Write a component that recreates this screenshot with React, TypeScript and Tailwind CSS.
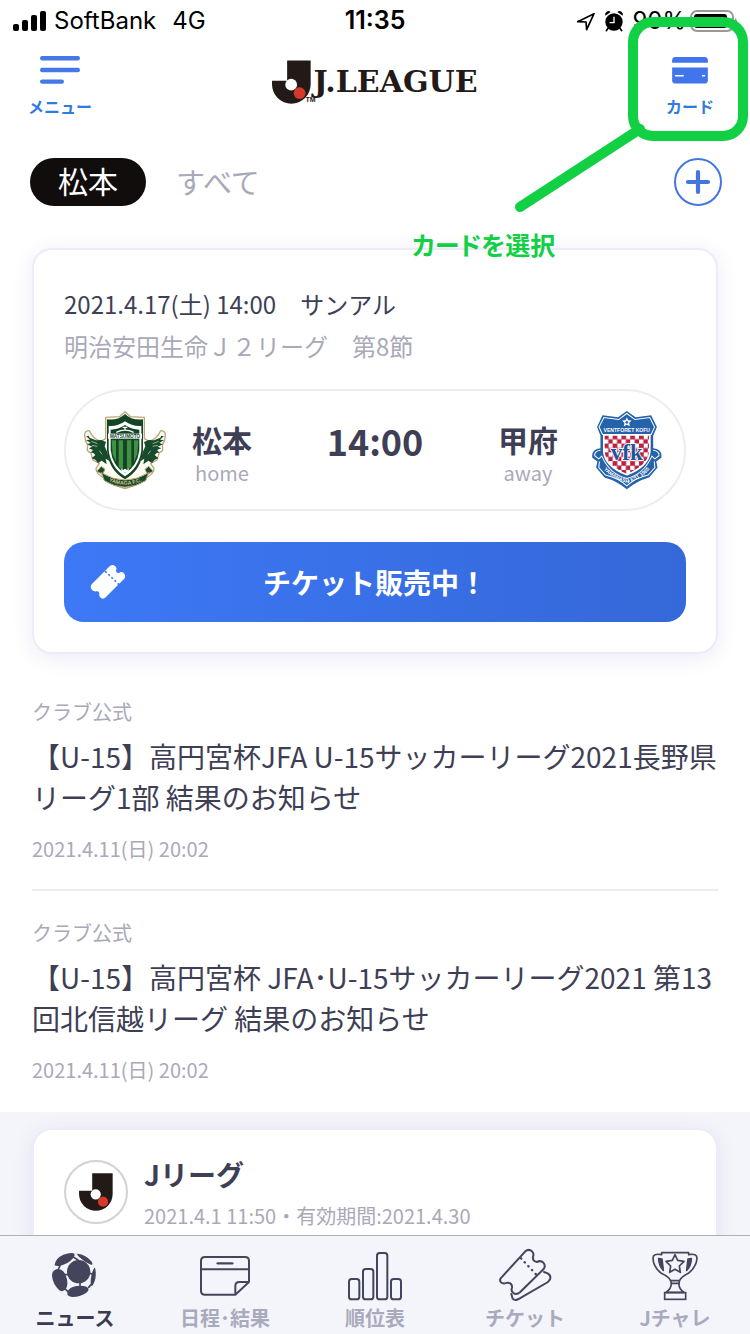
import type { ReactNode } from "react";

type Article = {
  category: string;
  title: string;
  date: string;
};

const articles: Article[] = [
  {
    category: "クラブ公式",
    title: "【U-15】高円宮杯JFA U-15サッカーリーグ2021長野県リーグ1部 結果のお知らせ",
    date: "2021.4.11(日) 20:02",
  },
  {
    category: "クラブ公式",
    title: "【U-15】高円宮杯 JFA･U-15サッカーリーグ2021 第13回北信越リーグ 結果のお知らせ",
    date: "2021.4.11(日) 20:02",
  },
];

function JMark({ className }: { className?: string }) {
  return (
    <svg viewBox="70 180 116 130" className={className} aria-hidden="true">
      <path d="M115 181H185V252A57.5 57.5 0 0 1 70 252V241H115Z" fill="#231a18" />
      <circle cx="127" cy="253" r="17.5" fill="#fff" />
      <circle cx="152" cy="278" r="17.5" fill="#d5392b" />
    </svg>
  );
}

function StatusBar() {
  return (
    <div className="flex h-10 items-center px-3 pt-0.5 font-['Inter',sans-serif] text-2xl text-black">
      <div className="flex flex-1 items-center">
        <svg viewBox="0 0 34 22" className="h-[22px] w-[34px]" aria-hidden="true">
          <rect x="1" y="14" width="6" height="7" rx="2" />
          <rect x="10" y="10" width="6" height="11" rx="2" />
          <rect x="19" y="5" width="6" height="16" rx="2" />
          <rect x="28" y="1" width="6" height="20" rx="2" />
        </svg>
        <span className="ml-2">SoftBank</span>
        <span className="ml-4">4G</span>
      </div>
      <span className="text-[25px] font-semibold">11:35</span>
      <div className="flex flex-1 items-center justify-end">
        <svg viewBox="230 30 60 60" className="h-5 w-5" fill="none" stroke="#000" strokeWidth="5" strokeLinejoin="round" aria-hidden="true">
          <path d="M235 62L284 38L262 86L260 63Z" />
        </svg>
        <svg viewBox="314 26 60 64" className="ml-2 h-[22px] w-5" aria-hidden="true">
          <circle cx="344" cy="61" r="26" />
          <path d="M318 42a10 10 0 0 1 16-11zM370 42a10 10 0 0 0-16-11z" />
          <path d="M326 80l-5 7M362 80l5 7" stroke="#000" strokeWidth="5" strokeLinecap="round" />
          <path d="M344 45V63H331" fill="none" stroke="#fff" strokeWidth="4" />
        </svg>
        <span className="ml-2">90%</span>
        <svg viewBox="0 0 48 24" className="ml-1 h-6 w-12" aria-hidden="true">
          <rect x="1" y="2" width="42" height="20" rx="6" fill="none" stroke="#999" strokeWidth="2" />
          <rect x="4" y="5" width="33" height="14" rx="3" />
          <path d="M45 9a4 4 0 0 1 0 7z" fill="#999" />
        </svg>
      </div>
    </div>
  );
}

function Header() {
  return (
    <header className="grid grid-cols-[64px_1fr_64px] px-7 pt-4">
      <button type="button" className="flex flex-col items-center text-base font-bold leading-6 text-[#2f7be0]">
        <svg viewBox="0 0 40 28" className="h-7 w-10" stroke="#4379e6" strokeWidth="4.4" strokeLinecap="round" aria-hidden="true">
          <path d="M2.2 2.2H37.8M2.2 14H37.8M2.2 25.6H21.8" />
        </svg>
        <span className="mt-2.5 whitespace-nowrap">メニュー</span>
      </button>
      <h1 className="flex items-start justify-center pt-1 text-[#231a18]">
        <JMark className="h-11 w-[39px] shrink-0" />
        <span className="relative ml-0.5 whitespace-nowrap font-['DejaVu_Serif',serif] text-[30px] font-bold leading-[44px]">
          J.LEAGUE
          <span className="absolute -left-2 top-9 font-['Liberation_Sans',sans-serif] text-[7px] leading-[8px]">TM</span>
        </span>
      </h1>
      <button type="button" className="flex flex-col items-center text-base font-bold leading-6 text-[#2f7be0]">
        <svg viewBox="0 0 38 29" className="h-7 w-[38px]" fill="#4175ec" aria-hidden="true">
          <path d="M4 1H34Q37.500 1 37.500 4.500V7H.5V4.500Q.5 1 4 1Z" />
          <path d="M.5 12H37.500V25Q37.500 28.500 34 28.500H4Q.5 28.500 .5 25Z" />
          <path d="M4 20.500H12M32 20.500H34" stroke="#fff" strokeWidth="1.500" strokeLinecap="round" />
        </svg>
        <span className="mt-2.5 whitespace-nowrap">カード</span>
      </button>
    </header>
  );
}

function ClubTabs() {
  return (
    <div className="mt-10 flex h-12 items-center pl-[30px] pr-7">
      <button type="button" className="h-12 rounded-full bg-[#110d0c] px-7 pb-1 text-[30px] leading-[44px] text-white">
        松本
      </button>
      <button type="button" className="ml-[30px] pb-0.5 text-[29px] leading-[46px] text-[#a9a9b9]">
        すべて
      </button>
      <button type="button" aria-label="クラブを追加" className="ml-auto h-12 w-12">
        <svg viewBox="0 0 48 48" fill="none" stroke="#4377df" strokeLinecap="round">
          <circle cx="24" cy="24" r="23" strokeWidth="2" />
          <path d="M24 14V34M14 24H34" strokeWidth="4.200" />
        </svg>
      </button>
    </div>
  );
}

function MatsumotoCrest() {
  return (
    <svg viewBox="40 32 246 236" className="h-20 w-[82px]" role="img" aria-label="松本山雅FC">
      <path
        d="M163 35L180 50L221 52V116L236 124Q260 115 270 92Q284 92 284 106Q284 122 275 135L276 146Q278 154 266 158L259 180Q250 186 240 190L250 206Q252 222 218 238Q190 258 163 266Q136 258 108 238Q74 222 76 206L86 190Q76 186 67 180L60 158Q48 154 50 146L51 135Q42 122 42 106Q42 92 56 92Q66 115 90 124L105 116V52L146 50Z"
        fill="#fffdf3"
        stroke="#bda77a"
        strokeWidth="4"
        strokeLinejoin="round"
      />
      {/* wings and bodies */}
      {["", "translate(326 0) scale(-1 1)"].map((transform) => (
        <g key={transform} transform={transform}>
          <path
            d="M49 97L57 113L76 121L92 120L106 126L102 139L110 157L116 183L105 176L108 193L93 182L82 189L74 179L63 175L74 165L67 158H59L67 150L54 145L65 140L49 133L60 129L46 120L58 119L46 108L54 108Z"
            fill="#164c2b"
          />
          <path d="M62 124l18 7M64 136l16 3M86 152l8 11" stroke="#d9e3ce" strokeWidth="2" fill="none" />
          <path d="M78 214l14-15 11 9-7 15z" fill="#164c2b" stroke="#bda77a" strokeWidth="3" />
        </g>
      ))}
      <path d="M163 42Q183 62 217 58V151Q212 211 163 238Q114 211 109 151V58Q143 62 163 42Z" fill="#124425" />
      <path d="M163 64Q185 80 212 78V151Q205 204 163 229Q121 204 114 151V78Q141 80 163 64Z" fill="#fff" />
      <path d="M163 75Q184 89 206 89V151Q200 199 163 220Q126 199 120 151V89Q142 89 163 75Z" fill="#124425" />
      <path d="M156 82h14M163 82v10M137 97Q163 84 189 97" stroke="#fff" strokeWidth="4" fill="none" />
      <rect x="112" y="101" width="102" height="15" fill="#fff" />
      <text x="163" y="113" textAnchor="middle" fontSize="14" fontWeight="bold" fill="#124425" fontFamily="Liberation Sans, sans-serif">
        MATSUMOTO
      </text>
      <path d="M123 121H136V186L126 162ZM144 121H157V211L144 200ZM169 121H182V200L169 211ZM190 121H203L200 162L190 186Z" fill="#409242" />
      <path d="M151 205l6 5 6-4 6 4 6-5-3 13h-18z" fill="#fff" />
      <path d="M92 218Q163 262 234 218L225 242Q163 281 101 242Z" fill="#164c2b" stroke="#bda77a" strokeWidth="3" />
      <path id="yamaga-line" d="M99 235Q163 274 229 235" fill="none" />
      <text fontSize="16" fontWeight="bold" fill="#d5bd83" fontFamily="Liberation Sans, sans-serif">
        <textPath href="#yamaga-line" startOffset="50%" textAnchor="middle">
          YAMAGA F.C.
        </textPath>
      </text>
    </svg>
  );
}

function KofuCrest() {
  return (
    <svg viewBox="36 32 210 236" className="h-20 w-[71px]" role="img" aria-label="ヴァンフォーレ甲府">
      <defs>
        <pattern id="kofu-check" x="71" y="105" width="26" height="26" patternUnits="userSpaceOnUse">
          <rect width="26" height="26" fill="#fff" />
          <path d="M0 0h14v14H0zM13 13h13v13H13z" fill="#b9213f" />
        </pattern>
      </defs>
      <path
        d="M139 35L165 53L211 47L228 82L217 108V145Q245 148 241 173L226 184L230 202L205 231Q169 241 139 266Q109 241 73 231L48 202L52 184L37 173Q33 148 61 145V108L51 82L67 47L113 53Z"
        fill="#2462a9"
      />
      <path d="M139 42L163 60L207 54L221 82L211 104H67L57 82L71 54L115 60Z" fill="none" stroke="#fff" strokeWidth="3" />
      <path d="M71 105H207V154Q204 198 139 223Q74 198 71 154Z" fill="url(#kofu-check)" stroke="#fff" strokeWidth="5" />
      <path d="M139 53l4 9 10 1-7 7 2 10-9-5-9 5 2-10-7-7 10-1z" fill="#fff" />
      <circle cx="139" cy="68" r="4" fill="#2462a9" />
      <text x="139" y="96" textAnchor="middle" fontSize="15" fontWeight="bold" fill="#fff" fontFamily="Liberation Sans Narrow, Liberation Sans, sans-serif">
        VENTFORET KOFU
      </text>
      <text x="139" y="179" textAnchor="middle" fontSize="68" fontWeight="bold" fill="#1f559b" stroke="#fff" strokeWidth="5" paintOrder="stroke" fontFamily="Liberation Serif, serif">
        vfk
      </text>
      <path d="M61 151Q42 153 44 167L56 176L65 168Q89 222 139 234Q189 222 213 168L222 176L234 167Q236 153 217 151" fill="none" stroke="#fff" strokeWidth="3" />
      <path d="M58 184L56 202L76 224Q112 232 139 256Q166 232 202 224L222 202L220 184" fill="none" stroke="#fff" strokeWidth="3" />
      <path id="kofu-line" d="M60 192Q84 231 139 248Q194 231 218 192" fill="none" />
      <text fontSize="15" fontWeight="bold" fill="#fff" fontFamily="Liberation Sans, sans-serif">
        <textPath href="#kofu-line" startOffset="50%" textAnchor="middle">
          YAMANASHI EST 1965
        </textPath>
      </text>
    </svg>
  );
}

function Team({ name, side }: { name: string; side: string }) {
  return (
    <div className="flex w-[60px] flex-col items-center pt-2">
      <span className="text-[30px] font-bold leading-9">{name}</span>
      <span className="mt-0.5 text-xl leading-7 text-[#a9a9b9]">{side}</span>
    </div>
  );
}

function MatchCard() {
  return (
    <section className="mx-8 mt-[42px] rounded-[20px] border-2 border-[#ececf6] bg-white px-[30px] pb-[30px] pt-[33px] shadow-[0_4px_20px_rgba(90,90,190,0.12)]">
      <p className="text-2xl leading-[42px]">2021.4.17(土) 14:00　サンアル</p>
      <p className="text-2xl leading-[42px] text-[#a9a9b9]">明治安田生命Ｊ２リーグ　第8節</p>
      <div className="mt-[22px] flex h-[122px] items-center justify-between rounded-full border-2 border-[#ececf2] pl-[18px] pr-[21px]">
        <div className="flex items-center gap-[26px]">
          <MatsumotoCrest />
          <Team name="松本" side="home" />
        </div>
        <span className="mb-5 text-4xl font-bold leading-[44px]">14:00</span>
        <div className="flex items-center gap-[34px]">
          <Team name="甲府" side="away" />
          <KofuCrest />
        </div>
      </div>
      <button
        type="button"
        className="mt-[31px] grid h-20 w-full grid-cols-[36px_1fr_36px] items-center rounded-[20px] bg-linear-to-r from-[#3d78f6] to-[#3568d8] px-[26px] text-[28px] font-bold text-white"
      >
        <svg viewBox="91 105 108 108" className="h-9 w-9" aria-hidden="true">
          <path
            d="M96 166L150 112Q158 105 166 111Q173 117 169 124Q169 133 178 132Q186 125 193 133Q200 142 193 150L138 205Q131 213 123 206Q117 201 119 194Q118 185 110 187Q102 188 97 183Q90 175 96 166Z"
            fill="#fff"
          />
          <path d="M136 126L180 169" stroke="#3d76f2" strokeWidth="5" strokeDasharray="7 7 6 7 6 7 6 7 8" />
        </svg>
        <span>チケット販売中！</span>
      </button>
    </section>
  );
}

function ArticleItem({ article }: { article: Article }) {
  return (
    <a href="#article" className="block pb-[26px] pt-7">
      <p className="text-xl leading-7 text-[#a9a9b9]">{article.category}</p>
      <h2 className="mt-2.5 text-[28px] leading-[41px]">{article.title}</h2>
      <p className="mt-[17px] text-xl leading-7 text-[#a9a9b9]">{article.date}</p>
    </a>
  );
}

function LeagueCard() {
  return (
    <section className="bg-[#f4f5fa] px-8 pt-4">
      <div className="flex min-h-[180px] items-start gap-4 rounded-t-[20px] border-2 border-[#ececf6] bg-white px-[30px] pt-[30px] shadow-[0_4px_20px_rgba(90,90,190,0.12)]">
        <div className="flex h-16 w-16 items-center justify-center rounded-full border-2 border-[#d2d2d4]">
          <JMark className="h-[38px] w-[34px]" />
        </div>
        <div>
          <h2 className="-mt-1 text-[28px] font-bold leading-9">Jリーグ</h2>
          <p className="mt-2.5 text-xl leading-7 text-[#a9a9b9]">2021.4.1 11:50・有効期間:2021.4.30</p>
        </div>
      </div>
    </section>
  );
}

function TabIcon({ viewBox, children }: { viewBox: string; children: ReactNode }) {
  return (
    <svg
      viewBox={viewBox}
      className="h-[54px] w-[54px]"
      fill="none"
      stroke="#44455c"
      strokeWidth="6"
      strokeLinejoin="round"
      strokeLinecap="round"
      aria-hidden="true"
    >
      {children}
    </svg>
  );
}

const tabs = [
  {
    label: "ニュース",
    icon: (
      <TabIcon viewBox="144 444 162 162">
        <circle cx="222" cy="525" r="65" strokeWidth="1" stroke="#c5c6d2" />
        <g fill="#44455c" stroke="none">
          <circle cx="236" cy="515" r="35" />
          <path d="M164 496Q164 476 190 464Q218 454 224 463Q225 475 202 489Q175 503 164 496Z" />
          <path d="M231 461Q259 464 274 484Q281 496 273 494Q255 487 240 473Q231 466 231 461Z" />
          <path d="M169 508Q185 504 195 521Q207 547 199 564Q193 577 180 572Q159 555 156 528Q156 512 169 508Z" />
          <path d="M285 503Q290 524 284 543Q276 564 273 555Q270 543 275 523Q280 504 285 503Z" />
          <path d="M202 582Q201 568 218 561Q242 553 261 561Q272 569 257 580Q240 591 217 591Q202 588 202 582Z" />
        </g>
        <path d="M180 497L174 510M218 470L234 480M192 524L206 524M240 548L240 558M270 520L277 523M197 568L206 577M266 562L273 554" strokeWidth="5" />
      </TabIcon>
    ),
  },
  {
    label: "日程･結果",
    icon: (
      <TabIcon viewBox="594 444 162 162">
        <path d="M706 584H615Q603 584 603 572V483Q603 471 615 471H735Q747 471 747 483V546L706 584V558Q706 546 718 546H747" />
        <path d="M603 508H747" />
        <path d="M653 490H697" strokeWidth="7" />
      </TabIcon>
    ),
  },
  {
    label: "順位表",
    icon: (
      <TabIcon viewBox="294 54 162 162">
        <rect x="297" y="147" width="31" height="61" rx="8" />
        <rect x="339" y="117" width="31" height="91" rx="8" />
        <rect x="381" y="69" width="31" height="139" rx="8" />
        <rect x="423" y="147" width="30" height="61" rx="8" />
      </TabIcon>
    ),
  },
  {
    label: "チケット",
    icon: (
      <TabIcon viewBox="-6 54 162 162">
        <path d="M2 145L76 64Q86 55 96 64Q103 71 99 80Q97 94 111 96Q122 90 130 98Q138 107 131 117L60 187Q49 196 40 189Q32 182 36 173Q37 159 24 158Q9 163 3 157Q-2 151 2 145Z" />
        <path d="M132 126L143 130Q154 136 150 148L144 156L58 206Q45 214 38 206L34 192" />
        <path d="M63 85L108 133" strokeDasharray="1 15" strokeWidth="7" />
      </TabIcon>
    ),
  },
  {
    label: "Jチャレ",
    icon: (
      <TabIcon viewBox="444 54 162 162">
        <g strokeWidth="5">
          <path d="M485 68H566V74Q591 69 591 84Q590 110 565 130Q543 142 539 151L537 160Q536 177 552 187H498Q514 177 514 160L511 151Q508 142 484 130Q459 110 459 84Q459 69 485 74Z" />
          <path d="M514 152H537M514 160H537" />
          <rect x="494" y="188" width="63" height="20" strokeLinejoin="miter" />
          <path d="M525 74L533 91L552 94L538 108L541 127L525 118L509 127L512 108L498 94L517 91Z" />
          <path d="M476 86Q477 108 490 121L486 87ZM574 86Q573 108 560 121L564 87Z" fill="#44455c" />
        </g>
      </TabIcon>
    ),
  },
];

function TabBar() {
  return (
    <nav className="z-10 grid shrink-0 grid-cols-5 border-t border-[#b0b0b8] bg-[#f4f5fa] pb-0.5 pt-3">
      {tabs.map((tab, i) => (
        <button
          key={tab.label}
          type="button"
          aria-current={i === 0 ? "page" : undefined}
          className={`flex flex-col items-center text-xl font-bold ${i === 0 ? "text-[#3a3b50]" : "text-[#a9aabd]"}`}
        >
          {tab.icon}
          <span className="mt-0.5 leading-7">{tab.label}</span>
        </button>
      ))}
    </nav>
  );
}

// Hand-drawn callout that points at the card button
function CardCallout() {
  return (
    <div className="pointer-events-none absolute right-0 top-0 z-20 w-[340px] text-[#13cf45]">
      <svg viewBox="410 0 340 226" className="w-full" fill="none" stroke="#11d044" strokeWidth="10" strokeLinecap="round" aria-hidden="true">
        <rect x="633" y="22" width="110" height="114" rx="20" />
        <path d="M520 207L640 129" />
      </svg>
      <p className="pl-0.5 text-[25px] font-bold leading-9 [font-feature-settings:'palt']">カードを選択</p>
    </div>
  );
}

export default function App() {
  return (
    <div className="relative flex h-screen flex-col overflow-hidden bg-white font-['Noto_Sans_CJK_JP',sans-serif] text-[#3e3f55]">
      <StatusBar />
      <Header />
      <main className="min-h-0 flex-1 overflow-y-auto [scrollbar-width:none]">
        <ClubTabs />
        <MatchCard />
        <div className="mx-8 mt-4 divide-y-2 divide-[#ebebf0] pb-0.5">
          {articles.map((article) => (
            <ArticleItem key={article.title} article={article} />
          ))}
        </div>
        <LeagueCard />
      </main>
      <TabBar />
      <CardCallout />
    </div>
  );
}
